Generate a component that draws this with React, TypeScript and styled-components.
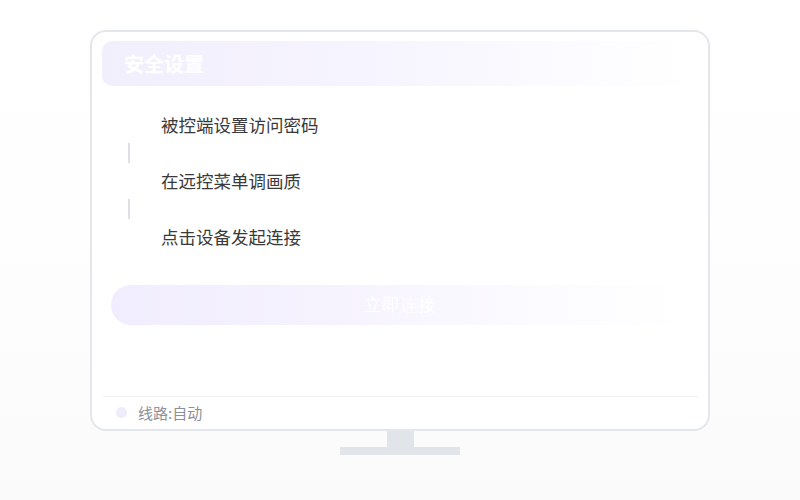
import styled, { createGlobalStyle } from "styled-components";

const GlobalStyle = createGlobalStyle`
    html, body {
        margin : 0;
        padding : 0;
    }
    body {
        width : 800px;
        height : 500px;
        overflow : hidden;
        background : linear-gradient(180deg, #ffffff 0%, #fdfdfd 60%, #fafafa 100%);
        font-family : "Noto Sans CJK SC", "Noto Sans", sans-serif;
    }
`

const steps = ["被控端设置访问密码", "在远控菜单调画质", "点击设备发起连接"];

const App = () => {
    return (
        <>
            <GlobalStyle />
            <StPage>
                <StMonitor>
                    <StHeader>安全设置</StHeader>
                    <StSteps>
                        {steps.map((text, i) => (
                            <li key={text}>
                                <StStep>{text}</StStep>
                                {i < steps.length - 1 && <StConnector />}
                            </li>
                        ))}
                    </StSteps>
                    <StConnectButton>立即连接</StConnectButton>
                    <StFooter>
                        <StDot />
                        线路:自动
                    </StFooter>
                </StMonitor>
                <StNeck />
                <StBase />
            </StPage>
        </>
    );
};

export default App;

const StPage = styled.div`
    display : flex;
    flex-direction : column;
    align-items : center;
    padding-top : 30px;
`

const StMonitor = styled.div`
    box-sizing : border-box;
    width : 620px;
    height : 401px;
    border : 2px solid #e3e6ea;
    border-radius : 16px;
    background : #ffffff;
    padding : 9px 10px 0;
    display : flex;
    flex-direction : column;
`

const StHeader = styled.div`
    height : 45px;
    border-radius : 10px;
    padding-left : 22px;
    display : flex;
    align-items : center;
    background : linear-gradient(90deg, #f2effd 0%, #f6f4fe 45%, rgba(250, 249, 255, 0.6) 80%, rgba(255, 255, 255, 0) 100%);
    color : #ffffff;
    font-size : 20px;
    font-weight : 700;
`

const StSteps = styled.ul`
    list-style : none;
    margin : 27px 0 0;
    padding : 0 0 0 59px;
`

const StStep = styled.div`
    font-size : 17.5px;
    line-height : 24px;
    color : #3a3a3a;
`

const StConnector = styled.div`
    width : 1.5px;
    height : 20px;
    margin : 6px 0 6px -33px;
    background : #dedfe5;
`

const StConnectButton = styled.button`
    margin : 36px 9px 0;
    height : 40px;
    border : none;
    border-radius : 20px;
    background : linear-gradient(90deg, #f1edfe 0%, #f6f3fe 40%, #fbfaff 70%, rgba(255, 255, 255, 0.9) 100%);
    color : #ffffff;
    font-family : serif;
    font-size : 18px;
    padding : 0;
`

const StFooter = styled.div`
    margin-top : auto;
    height : 31px;
    border-top : 1px solid #eef0f3;
    margin-left : 1px;
    padding-left : 13px;
    padding-bottom : 1px;
    display : flex;
    align-items : center;
    gap : 11px;
    color : #8e9097;
    font-size : 15px;
`

const StDot = styled.span`
    width : 11px;
    height : 11px;
    border-radius : 50%;
    background : #efecfc;
`

const StNeck = styled.div`
    width : 27px;
    height : 16px;
    background : #e1e4e8;
`

const StBase = styled.div`
    width : 120px;
    height : 8px;
    background : #e1e4e8;
`
